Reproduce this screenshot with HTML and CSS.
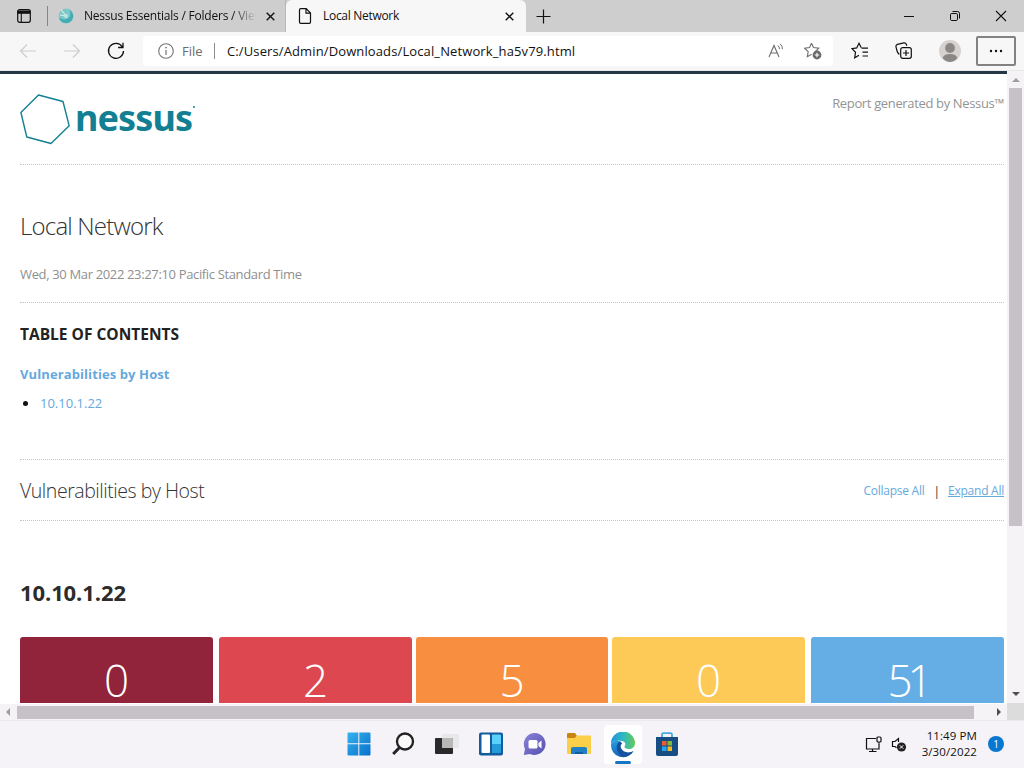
FILE: index.html
```html
<!DOCTYPE html>
<html lang="en">
<head>
<meta charset="utf-8">
<title>Local Network</title>
<link rel="stylesheet" href="styles.css">
</head>
<body>
<div class="screen">
  <div class="tabbar">
    <svg class="tab-actions" width="16" height="16" viewBox="0 0 16 16"><rect x="1.7" y="1.7" width="12.6" height="12.6" rx="2" fill="none" stroke="#111" stroke-width="1.2"/><path d="M1.5 2.5h13v3.3h-13z" fill="#111"/><path d="M5.3 5v9" stroke="#111" stroke-width="1.1"/></svg>
    <span class="tab-divider"></span>
    <div class="tab tab-old">
      <svg width="16" height="16" viewBox="0 0 16 16"><circle cx="8" cy="8" r="7.4" fill="#7cc8c8"/><path d="M1 9.500a7.200 7.200 0 0 0 13.500 1.500A7.300 7.300 0 0 0 11 1.400c2 3 2 8-2 9.600-3 1-6 0-8-1.500z" fill="#44acb2"/><path d="M8 8L3 1.500M8 8l-6-1" stroke="#d5eeee" stroke-width="1.100"/><circle cx="8" cy="8" r="2" fill="#bfe4e4"/></svg>
      <span class="tab-title old-title">Nessus Essentials / Folders / View</span>
      <svg class="close" width="9" height="9" viewBox="0 0 9 9"><path d="M.7.7l7.600 7.600M8.300.7L.7 8.300" stroke="#111" stroke-width="1.400"/></svg>
    </div>
    <div class="tab tab-active">
      <svg width="14" height="16" viewBox="0 0 14 16"><path d="M1.500 2q0-1.300 1.300-1.300h5.400l4.300 4.300v9q0 1.300-1.300 1.300H2.800q-1.300 0-1.300-1.300zM8 .9v4.300h4.300" fill="none" stroke="#111" stroke-width="1.200"/></svg>
      <span class="tab-title new-title">Local Network</span>
      <svg class="close" width="9" height="9" viewBox="0 0 9 9"><path d="M.7.7l7.600 7.600M8.300.7L.7 8.300" stroke="#111" stroke-width="1.400"/></svg>
    </div>
    <svg class="plus" width="15" height="15" viewBox="0 0 15 15"><path d="M7.500.5v14M.5 7.500h14" stroke="#111" stroke-width="1.200"/></svg>
    <div class="window-buttons">
      <svg width="12" height="12" viewBox="0 0 12 12"><path d="M1 6.500h10" stroke="#111"/></svg>
      <svg width="12" height="12" viewBox="0 0 12 12"><rect x="1.500" y="3.500" width="7" height="7" rx="1.300" fill="none" stroke="#111"/><path d="M3.500 1.500h5q2 0 2 2v5" fill="none" stroke="#111"/></svg>
      <svg width="12" height="12" viewBox="0 0 12 12"><path d="M1 1l10 10M11 1L1 11" stroke="#111" stroke-width="1.100"/></svg>
    </div>
  </div>

  <div class="toolbar">
    <div class="nav">
      <svg width="18" height="16" viewBox="0 0 18 16"><path d="M17 8H1.500M8 1.500L1.500 8 8 14.500" fill="none" stroke="#cdcdcd" stroke-width="1.200"/></svg>
      <svg width="18" height="16" viewBox="0 0 18 16"><path d="M1 8h15.500M10 1.500L16.500 8 10 14.500" fill="none" stroke="#cdcdcd" stroke-width="1.200"/></svg>
      <svg width="18" height="18" viewBox="0 0 18 18"><path d="M15.300 4.800A7.500 7.500 0 1 0 16.500 9M16 .8v4.700h-4.900" fill="none" stroke="#111" stroke-width="1.300"/></svg>
    </div>
    <div class="address">
      <svg width="16" height="16" viewBox="0 0 16 16"><circle cx="8" cy="8" r="7.300" fill="none" stroke="#757575" stroke-width="1.100"/><path d="M8 7v5" stroke="#757575" stroke-width="1.200"/><circle cx="8" cy="4.600" r=".9" fill="#757575"/></svg>
      <span class="scheme">File</span>
      <span class="address-divider"></span>
      <span class="url">C:/Users/Admin/Downloads/Local_Network_ha5v79.html</span>
      <svg class="read" width="17" height="16" viewBox="0 0 17 16"><path d="M1 14L6 2.500 11 14M2.800 10h6.500" fill="none" stroke="#6e6e6e" stroke-width="1.100"/><path d="M9.800 2.500q1.800 1.300 1.700 3.500M12 .8q2.800 2 2.400 5.500" fill="none" stroke="#6e6e6e"/></svg>
      <svg width="18" height="18" viewBox="0 0 18 18"><path d="M7.500 1.200l2 4.300 5.300.7-3.500 3.500M7.500 1.200l-2 4.300-4.900.7 3.600 3.500-.9 5 4.300-2.400" fill="none" stroke="#6e6e6e" stroke-width="1.100"/><circle cx="13" cy="13" r="4.400" fill="#686868"/><path d="M13 10.700v4.600M10.700 13h4.600" stroke="#fff" stroke-width="1.100"/></svg>
    </div>
    <div class="tools">
      <svg width="18" height="18" viewBox="0 0 18 18"><path d="M10.500 6.200H17M11.500 10.200H17M11.500 14H17" stroke="#111" stroke-width="1.200"/><path d="M10.300 5.800L8 1.300 5.700 5.900 1 6.600l3.500 3.700-.8 5.500L8 13.300" fill="none" stroke="#111" stroke-width="1.200"/></svg>
      <svg width="18" height="18" viewBox="0 0 18 18"><path d="M4.300 12.500Q2.500 11 1.900 8.500L1 4.800Q.6 3 2.400 2.400L8.800.9q1.800-.3 2.500 1.400l.5 1.500" fill="none" stroke="#111" stroke-width="1.200"/><rect x="5.700" y="5.700" width="10.600" height="10.600" rx="2" fill="#f7f7f7" stroke="#111" stroke-width="1.200"/><path d="M11 8v6M8 11h6" stroke="#111" stroke-width="1.200"/></svg>
      <svg width="22" height="22" viewBox="0 0 22 22"><circle cx="11" cy="11" r="11" fill="#d5d2d0"/><circle cx="11" cy="8" r="4.900" fill="#8b8785"/><path d="M3.600 18q1.200-4 7.400-4t7.400 4Q15 22 11 22t-7.400-4z" fill="#8b8785"/></svg>
      <div class="more"><svg width="14" height="4" viewBox="0 0 14 4"><circle cx="2" cy="2" r="1.200" fill="#111"/><circle cx="7" cy="2" r="1.200" fill="#111"/><circle cx="12" cy="2" r="1.200" fill="#111"/></svg></div>
    </div>
  </div>

  <div class="browser">
    <main class="page">
      <header class="report-head">
        <div class="logo">
          <svg width="50" height="51" viewBox="0 0 50 51"><path d="M18.500 1L43 7.500l6.200 24.300L31 49.500 6.800 43 .9 18.500z" fill="none" stroke="#128092" stroke-width="1.400" stroke-linejoin="round"/></svg>
          <span class="wordmark">nessus</span><span class="mark"></span>
        </div>
        <span class="generated">Report generated by Nessus™</span>
      </header>
      <section class="intro">
        <h1>Local Network</h1>
        <p>Wed, 30 Mar 2022 23:27:10 Pacific Standard Time</p>
      </section>
      <section class="toc">
        <h2>TABLE OF CONTENTS</h2>
        <a class="toc-link">Vulnerabilities by Host</a>
        <div class="toc-item"><i></i><a>10.10.1.22</a></div>
      </section>
      <section class="hosts">
        <h3>Vulnerabilities by Host</h3>
        <div class="actions"><a class="collapse">Collapse All</a><span>|</span><a class="expand">Expand All</a></div>
      </section>
      <h4>10.10.1.22</h4>
      <div class="counts">
        <div class="critical">0</div><div class="high">2</div><div class="medium">5</div><div class="low">0</div><div class="info">51</div>
      </div>
    </main>
    <div class="vscroll">
      <svg width="8" height="4" viewBox="0 0 8 4"><path d="M0 4l4-4 4 4z" fill="#a09da0"/></svg>
      <div class="vthumb"></div>
      <svg class="down" width="8" height="4" viewBox="0 0 8 4"><path d="M0 0l4 4 4-4z" fill="#504c52"/></svg>
    </div>
    <div class="hscroll">
      <svg width="4" height="8" viewBox="0 0 4 8"><path d="M4 0L0 4l4 4z" fill="#a09da0"/></svg>
      <div class="hthumb"></div>
      <svg class="right" width="4" height="8" viewBox="0 0 4 8"><path d="M0 0l4 4-4 4z" fill="#504c52"/></svg>
    </div>
    <div class="corner"></div>
  </div>

  <footer class="taskbar">
    <div class="apps">
      <svg width="24" height="24" viewBox="0 0 24 24"><defs><linearGradient id="w" x2="1" y2="1"><stop stop-color="#35b3ed"/><stop offset="1" stop-color="#0870cc"/></linearGradient></defs><path d="M.5 1.500q0-1 1-1h9.800v10.800H.5zM12.300.5h10.200q1 0 1 1v9.800H12.300zM.5 12.300h10.800v11.200H1.500q-1 0-1-1zM12.300 12.300h11.200v10.200q0 1-1 1H12.300z" fill="url(#w)"/></svg>
      <svg width="24" height="24" viewBox="0 0 24 24"><circle cx="14" cy="9.500" r="8" fill="#fbfafb" stroke="#222" stroke-width="2.300"/><path d="M8.300 15.700L2.200 22" stroke="#222" stroke-width="3"/></svg>
      <svg width="24" height="24" viewBox="0 0 24 24"><rect x="7" y="2" width="17" height="14" rx="1" fill="#e9e8e9"/><rect y="6" width="18" height="16" rx="1" fill="#292929"/><path d="M7 6h10q1 0 1 1v9H7z" fill="#b8b8b8"/></svg>
      <svg width="24" height="24" viewBox="0 0 24 24"><rect width="24" height="23" y=".5" rx="2" fill="#125b9e"/><rect x="2.500" y="2.500" width="8.500" height="18.500" rx="1" fill="#fff"/><path d="M13 2.500h8q1 0 1 1v9h-9z" fill="#5bd0fb"/><path d="M13 12.500h9v7.500q0 1-1 1h-8z" fill="#249bd9"/></svg>
      <svg width="24" height="24" viewBox="0 0 24 24"><defs><linearGradient id="c" x2="1" y2="1"><stop stop-color="#8a83d8"/><stop offset="1" stop-color="#5550b1"/></linearGradient></defs><path d="M12 1a11 11 0 1 1-5 21L.8 23 2 17A11 11 0 0 1 12 1z" fill="url(#c)"/><rect x="5.500" y="8" width="9" height="8.500" rx="1.500" fill="#fff"/><path d="M15.500 11l3-2.500v8l-3-2.500z" fill="#fff"/></svg>
      <svg width="24" height="24" viewBox="0 0 24 24"><path d="M0 5V2q0-1 1-1h7l2 3-2 2H0z" fill="#c98514"/><path d="M0 6h8l2-2.500h13q1 0 1 1V21q0 1-1 1H1q-1 0-1-1z" fill="#fbcf48"/><path d="M4 22v-5q0-2 2-2h12q2 0 2 2v5z" fill="#237fc4"/><path d="M8 22v-2h8v2z" fill="#125e9e"/></svg>
      <div class="active-app">
        <svg width="26" height="26" viewBox="0 0 26 26"><defs><linearGradient id="e" x2="1"><stop stop-color="#2693d8"/><stop offset=".5" stop-color="#2eb8c2"/><stop offset="1" stop-color="#64cb55"/></linearGradient><linearGradient id="f" x2="0" y2="1"><stop stop-color="#249de1"/><stop offset="1" stop-color="#1664b7"/></linearGradient></defs><path d="M1 12A12 12 0 0 1 25 11c0 4-3 6-6 6-3.500 0-5.500-1.500-4-3.500 1.200-2-.5-4.500-3.500-4.500C7 8 3 9 1 12z" fill="url(#e)"/><path d="M1 12.500C2.500 9 7 8 10 9.300 7 11 7 17 12 20c4 2.300 8.500 1 11.500-1A12 12 0 0 1 1 12.500z" fill="url(#f)"/><path d="M10 9.300C5.500 11 5 20 12.500 25c4.500 0 8.500-2 11-6-5 3-11 1-12.500-3-.7-2-.2-3.700 1.200-4.500z" fill="#15519c"/></svg>
        <i></i>
      </div>
      <svg width="24" height="25" viewBox="0 0 24 25"><path d="M7 6V2.500Q7 1.200 8.300 1.200h7.400Q17 1.200 17 2.500V6" fill="none" stroke="#46a9df" stroke-width="1.800"/><path d="M1 5h22v17q0 2-2 2H3q-2 0-2-2z" fill="#174d82"/><path d="M7 9h4.500v4.500H7z" fill="#f05a2d"/><path d="M12.500 9H17v4.500h-4.500z" fill="#80ba39"/><path d="M7 14.500h4.500V19H7z" fill="#25a6ed"/><path d="M12.500 14.500H17V19h-4.500z" fill="#fab91c"/></svg>
    </div>
    <div class="tray">
      <svg width="17" height="17" viewBox="0 0 17 17"><path d="M11 2.500H1.500v10.500H14V8.500M7.500 13v2.500M4 15.500h7.500" fill="none" stroke="#111" stroke-width="1.200"/><rect x="12" y="1" width="4" height="5" rx="1" fill="none" stroke="#111" stroke-width="1.200"/><path d="M14 6v3" stroke="#111"/></svg>
      <svg width="16" height="15" viewBox="0 0 16 15"><path d="M7.500 5V1.500L4 4.500H1.500v5H4l1.500 1.200" fill="none" stroke="#111" stroke-width="1.200"/><circle cx="10.500" cy="10" r="4.600" fill="#222"/><path d="M8.800 8.300l3.400 3.400M12.200 8.300l-3.400 3.400" stroke="#fff"/></svg>
      <div class="clock"><span class="time">11:49 PM</span><span class="date">3/30/2022</span></div>
      <div class="badge">1</div>
    </div>
  </footer>
</div>
</body>
</html>
```

FILE: styles.css
```css
* { box-sizing: border-box; }
body { margin: 0; font-family: "Open Sans", "Noto Sans", sans-serif; color: #111; }
svg { display: block; flex: none; }
.screen { width: 1024px; height: 768px; display: flex; flex-direction: column; overflow: hidden; background: #fff; white-space: nowrap; }
.tabbar { height: 32px; flex: none; background: #cecece; display: flex; align-items: center; padding-left: 16px; }
.tab-divider { width: 1px; height: 20px; background: #858585; margin-left: 15px; }
.tab { display: flex; align-items: center; height: 32px; }
.tab-old { width: 238px; padding-left: 10px; border-right: 1px solid #b8b8b8; }
.tab-title { font-size: 12px; line-height: 16px; overflow: hidden; }
.old-title { width: 172px; margin-left: 10px; letter-spacing: -.22px; mask-image: linear-gradient(90deg, #000 86%, transparent); }
.tab-old .close { margin-left: 10px; }
.tab-active { width: 240px; background: #f7f7f7; border-radius: 6px 6px 0 0; padding-left: 12px; }
.new-title { margin-left: 11px; width: 170px; letter-spacing: -.3px; }
.tab-active .close { margin-left: 12px; }
.plus { margin-left: 10px; }
.window-buttons { margin-left: auto; display: flex; gap: 34px; padding-right: 17px; }
.toolbar { height: 39px; flex: none; background: #f7f7f7; display: flex; align-items: center; border-bottom: 1px solid #e8e8ea; }
.nav { display: flex; align-items: center; width: 143px; padding-left: 19px; gap: 26px; }
.address { width: 690px; height: 30px; background: #fff; border-radius: 3px; display: flex; align-items: center; padding-left: 15px; }
.scheme { width: 32px; margin-left: 8px; font-size: 13px; color: #6b6b6b; }
.address-divider { width: 1px; height: 16px; background: #8c8c8c; }
.url { width: 541px; margin-left: 12px; font-size: 13px; letter-spacing: .12px; color: #111; }
.address .read { margin-right: 19px; }
.tools { display: flex; align-items: center; padding-left: 18px; }
.tools > svg:nth-child(2) { margin-left: 26px; }
.tools > svg:nth-child(3) { margin-left: 26px; }
.more { width: 40px; height: 30px; margin-left: 15px; border: 2px solid #828282; border-radius: 2px; display: flex; align-items: center; justify-content: center; }
.browser { height: 649px; flex: none; display: grid; grid-template-columns: 1007px 17px; grid-template-rows: 632px 17px; }
.page { border-top: 3px solid #263745; padding: 0 3px 0 20px; overflow: hidden; background: #fff; }
.report-head { height: 91px; display: flex; justify-content: space-between; border-bottom: 1px dotted #c4c4c4; }
.logo { display: flex; padding-top: 20px; }
.wordmark { font: 700 36px/40px "Noto Sans", sans-serif; color: #128092; letter-spacing: -.9px; margin: 4px 0 0 5px; }
.mark { width: 2px; height: 2px; border-radius: 1px; background: #128092; margin: 12px 0 0 1px; }
.generated { font-size: 13px; line-height: 18px; margin-top: 20px; color: #949494; letter-spacing: -.35px; }
.intro { height: 138px; border-bottom: 1px dotted #c4c4c4; padding-top: 45px; }
h1, h2, h3, h4, p { margin: 0; }
h1 { font-size: 24px; line-height: 32px; font-weight: 300; letter-spacing: -.8px; color: #333; }
.intro p { font-size: 13px; line-height: 18px; margin-top: 23px; letter-spacing: -.35px; color: #8f8f8f; }
.toc { height: 157px; padding-top: 20px; display: flex; flex-direction: column; align-items: flex-start; border-bottom: 1px dotted #c4c4c4; }
h2 { font-size: 15.5px; line-height: 22px; font-weight: 700; letter-spacing: 0; color: #222; }
a { color: #65a9dd; font-size: 13px; line-height: 18px; }
.toc-link { font-weight: 700; margin-top: 20px; letter-spacing: .1px; }
.toc-item { display: flex; align-items: center; margin-top: 11px; padding-left: 3px; }
.toc-item i { width: 5px; height: 5px; background: #111; border-radius: 50%; margin-right: 12px; }
.hosts { height: 61px; padding-top: 2px; border-bottom: 1px dotted #c4c4c4; display: flex; align-items: center; justify-content: space-between; }
h3 { font-size: 19.5px; line-height: 28px; font-weight: 300; letter-spacing: -.45px; color: #333; }
.actions { display: flex; align-items: center; font-size: 12px; color: #333; }
.actions a { font-size: 12px; letter-spacing: -.25px; }
.actions span { margin: 0 8px 0 9px; }
.expand { text-decoration: underline; }
h4 { font-size: 22px; line-height: 30px; font-weight: 700; margin-top: 56px; color: #2c2c2c; letter-spacing: -.1px; }
.counts { display: flex; margin-top: 30px; height: 90px; color: #fff; font-size: 44px; line-height: 60px; font-weight: 300; text-align: center; }
.counts div { width: 193px; border-radius: 3px 3px 0 0; padding-top: 13px; }
.counts .critical { background: #91243a; }
.counts .high { background: #dd4850; margin-left: 6px; }
.counts .medium { width: 192px; background: #f88e40; margin: 0 4px; }
.counts .low { background: #fdc957; }
.counts .info { background: #64ade5; margin-left: 6px; letter-spacing: -5px; }
.vscroll { background: #f5f3f6; display: flex; flex-direction: column; align-items: center; padding-top: 7px; }
.vthumb { width: 13px; height: 438px; margin-top: 6px; background: #c5c1c6; }
.down { margin-top: 166px; }
.hscroll { background: #f5f3f6; display: flex; align-items: center; padding: 0 6px; border-top: 1px solid #fff; }
.hthumb { width: 957px; height: 13px; margin-left: 7px; background: #c5c1c6; }
.right { margin-left: 23px; }
.corner { background: #dcdcdc; }
.taskbar { height: 48px; flex: none; background: #f5f3f7; display: grid; grid-template-columns: 865px 1fr; border-top: 1px solid #eceaed; }
.apps { display: flex; align-items: center; padding: 0 0 1px 347px; gap: 20px; }
.active-app { width: 38px; height: 39px; margin: 0 -7px; background: #fff; border-radius: 4px; display: flex; flex-direction: column; align-items: center; padding-top: 7px; }
.active-app i { width: 16px; height: 3px; margin-top: 3px; border-radius: 2px; background: #1575c5; }
.tray { display: flex; align-items: center; padding-bottom: 1px; }
.tray svg:nth-child(2) { margin-left: 9px; }
.clock { width: 70px; display: flex; flex-direction: column; align-items: flex-end; font-size: 11.5px; line-height: 16px; letter-spacing: .1px; }
.badge { width: 16px; height: 16px; border-radius: 50%; margin-left: 11px; background: #0877cf; color: #fff; font-size: 10px; line-height: 16px; text-align: center; }
```
